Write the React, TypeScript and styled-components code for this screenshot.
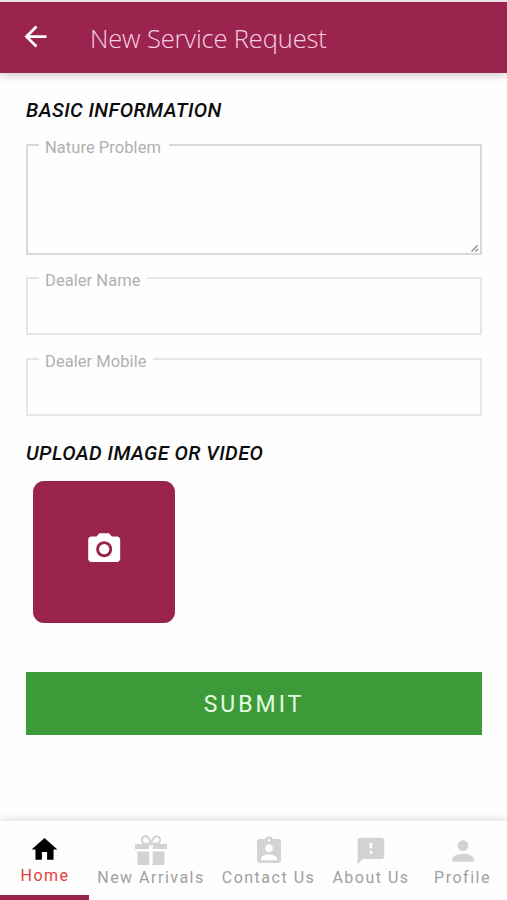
import React from 'react';
import styled, { createGlobalStyle } from 'styled-components';
import { MdArrowBack, MdAssignmentInd, MdFeedback, MdHome, MdPerson, MdPhotoCamera } from 'react-icons/md';

const maroon = '#9b244f';

const GlobalStyle = createGlobalStyle`
  * { box-sizing: border-box; }
  body { margin: 0; background: #fefefe; font-family: Roboto, sans-serif; }
`;

const Screen = styled.div`
  display: flex;
  flex-direction: column;
  width: 507px;
  height: 900px;
  overflow: hidden;
  border-top: 2px solid #e9e3e6;
  background: #fefefe;
`;

const AppBar = styled.header`
  display: flex;
  align-items: center;
  flex: none;
  height: 71px;
  padding: 0 0 2px 19px;
  background: ${maroon};
  color: #fff;
  box-shadow: 0 2px 8px rgba(0, 0, 0, 0.22);
`;

const BackButton = styled.button`
  display: flex;
  width: 71px;
  padding: 0;
  border: 0;
  background: none;
  color: inherit;
`;

const Title = styled.h1`
  margin: 2px 0 0;
  font: 300 25.5px/34px 'Open Sans', sans-serif;
  letter-spacing: -0.14px;
  color: #f5cfe0;
  white-space: nowrap;
`;

const Content = styled.main`
  display: flex;
  flex-direction: column;
  flex: 1;
  padding: 25px 25px 0 26px;
`;

const SectionTitle = styled.h2`
  margin: 0;
  font-size: 20px;
  line-height: 24px;
  font-weight: 500;
  font-style: italic;
  letter-spacing: 0.42px;
  color: #0c0c0c;
  white-space: nowrap;
`;

const UploadHeading = styled(SectionTitle)`
  margin-top: 25px;
`;

const Field = styled.div<{ $tall?: boolean }>`
  position: relative;
  display: flex;
  height: ${(p) => (p.$tall ? 111 : 58)}px;
  margin-top: 22px;
  border: 2px solid ${(p) => (p.$tall ? '#d9d9d9' : '#e6e6e6')};

  & + & + & {
    margin-top: 23px;
  }
`;

const FieldLabel = styled.label<{ $width: number }>`
  position: absolute;
  top: -8px;
  left: 11px;
  width: ${(p) => p.$width}px;
  padding-left: 6px;
  background: #fefefe;
  font-size: 16.5px;
  line-height: 20px;
  letter-spacing: 0.05px;
  color: #b0b0b0;
  white-space: nowrap;
`;

const Grip = styled.svg`
  margin: auto 1px 1px auto;
`;

const UploadTile = styled.button`
  display: flex;
  align-items: center;
  justify-content: center;
  width: 142px;
  height: 142px;
  margin: 16px 0 0 7px;
  padding: 0 0 6px;
  border: 0;
  border-radius: 11px;
  background: ${maroon};
  color: #fff;
`;

const SubmitButton = styled.button`
  height: 63px;
  margin-top: 49px;
  padding: 3px 0 0;
  border: 0;
  background: #3c9b38;
  color: #e6fbe3;
  font: 400 23px/28px Roboto, sans-serif;
  letter-spacing: 3px;
`;

const TabBar = styled.nav`
  display: grid;
  grid-template-columns: 89px 124px 111px 94px 89px;
  flex: none;
  height: 79px;
  background: #fefefe;
  box-shadow: 0 -2px 8px rgba(0, 0, 0, 0.13);
`;

const Tab = styled.a<{ $active?: boolean }>`
  display: flex;
  flex-direction: column;
  align-items: center;
  padding-top: ${(p) => (p.$active ? 12 : 14)}px;
  border-bottom: 5px solid ${(p) => (p.$active ? maroon : 'transparent')};
  color: ${(p) => (p.$active ? '#000' : '#d3d3d3')};
`;

const TabIcon = styled.span`
  display: flex;
  align-items: center;
  justify-content: center;
  height: 32px;
`;

const TabText = styled.span<{ $active?: boolean }>`
  margin-top: ${(p) => (p.$active ? 1 : 0.6)}px;
  padding-left: ${(p) => (p.$active ? 1 : 0)}px;
  font-size: 16px;
  line-height: 20px;
  letter-spacing: 1.5px;
  color: ${(p) => (p.$active ? '#e3403a' : '#a0a0a0')};
  white-space: nowrap;
`;

const GiftIcon = () => (
  <svg width="32" height="32" viewBox="0 0 32 32" fill="currentColor">
    <path d="M0 9h14.3v5H0zM17.7 9H32v5H17.7zM2.5 16.5h11.8V30H4Q2.5 30 2.5 28.5zM17.7 16.5h11.8v12Q29.5 30 28 30H17.7z" />
    <path
      d="M15.5 8.8H11C5.5 8.8 6 1.3 10.4 1.3 13.6 1.3 15 5.5 16 8.8 17 5.5 18.4 1.3 21.6 1.3 26 1.3 26.5 8.8 21 8.8Z"
      fill="none"
      stroke="currentColor"
      strokeWidth="2"
    />
  </svg>
);

const tabs = [
  { label: 'Home', icon: <MdHome size={31} />, active: true },
  { label: 'New Arrivals', icon: <GiftIcon /> },
  { label: 'Contact Us', icon: <MdAssignmentInd size={32} /> },
  { label: 'About Us', icon: <MdFeedback size={32} /> },
  { label: 'Profile', icon: <MdPerson size={32} /> },
];

export default function App() {
  return (
    <>
      <GlobalStyle />
      <Screen>
        <AppBar>
          <BackButton aria-label="Back">
            <MdArrowBack size={33} />
          </BackButton>
          <Title>New Service Request</Title>
        </AppBar>
        <Content>
          <SectionTitle>BASIC INFORMATION</SectionTitle>
          <Field $tall>
            <FieldLabel $width={130}>Nature Problem</FieldLabel>
            <Grip width="8" height="7" viewBox="0 0 8 7" fill="none" stroke="#858585" strokeWidth="1.3">
              <path d="M0.5 6.5L6.5 0.5M4.5 6.5L7 4" />
            </Grip>
          </Field>
          <Field>
            <FieldLabel $width={108}>Dealer Name</FieldLabel>
          </Field>
          <Field>
            <FieldLabel $width={114}>Dealer Mobile</FieldLabel>
          </Field>
          <UploadHeading>UPLOAD IMAGE OR VIDEO</UploadHeading>
          <UploadTile aria-label="Add photo or video">
            <MdPhotoCamera size={38.4} />
          </UploadTile>
          <SubmitButton>SUBMIT</SubmitButton>
        </Content>
        <TabBar>
          {tabs.map((tab) => (
            <Tab key={tab.label} $active={tab.active}>
              <TabIcon>{tab.icon}</TabIcon>
              <TabText $active={tab.active}>{tab.label}</TabText>
            </Tab>
          ))}
        </TabBar>
      </Screen>
    </>
  );
}
